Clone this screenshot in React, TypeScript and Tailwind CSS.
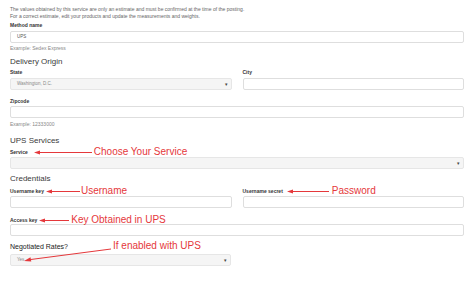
import React from "react";

// Small red callout arrow used by the annotations (points left)
const Arrow = ({ width }: { width: number }) => (
  <svg width={width} height={5} viewBox={`0 0 ${width} 5`} className="block shrink-0">
    <polygon points="0,2.5 6,0.5 6,4.5" fill="#e5383b" />
    <line x1={5} y1={2.5} x2={width} y2={2.5} stroke="#e5383b" strokeWidth={1} />
  </svg>
);

const Note = ({ children }: { children: React.ReactNode }) => (
  <span className="whitespace-nowrap text-[10px] leading-[8px] text-[#e5383b]">{children}</span>
);

const Label = ({ children }: { children: React.ReactNode }) => (
  <div className="whitespace-nowrap text-[5px] font-bold leading-[8px] text-[#333]">{children}</div>
);

const Input = ({ className = "" }: { className?: string }) => (
  <div className={`h-[12px] rounded-[2px] border border-[#dedede] bg-white ${className}`} />
);

const Select = ({ value, className = "" }: { value?: string; className?: string }) => (
  <div
    className={`flex h-[12px] items-center justify-between rounded-[2px] border border-[#e6e6e6] bg-[#f5f5f5] pl-[6px] pr-[3px] ${className}`}
  >
    <span className="text-[4.5px] leading-[6px] text-[#888]">{value}</span>
    <span className="text-[5px] leading-[6px] text-[#444]">▾</span>
  </div>
);

const Heading = ({ children, className = "" }: { children: React.ReactNode; className?: string }) => (
  <div className={`text-[8px] leading-[10px] text-[#3a3a3a] ${className}`}>{children}</div>
);

const Hint = ({ children, className = "" }: { children: React.ReactNode; className?: string }) => (
  <div className={`text-[5px] leading-[8px] text-[#888] ${className}`}>{children}</div>
);

export default function App() {
  return (
    <div
      className="relative h-[293px] w-[474px] overflow-hidden bg-white pl-[10px] pr-[10px] pt-[6px] text-[5px] leading-[8px]"
      style={{ fontFamily: '"Liberation Sans", Arial, sans-serif' }}
    >
      {/* intro */}
      <div className="text-[5px] leading-[7px] text-[#666]">
        The values obtained by this service are only an estimate and must be confirmed at the time of the posting.
        <br />
        For a correct estimate, edit your products and update the measurements and weights.
      </div>

      <div className="mt-[1px]">
        <Label>Method name</Label>
      </div>
      <div className="mt-[2px] flex h-[12px] items-center rounded-[2px] border border-[#dedede] pl-[6px]">
        <span className="text-[4.5px] leading-[6px] text-[#555]">UPS</span>
      </div>
      <Hint className="mt-[1px]">Example: Sedex Express</Hint>

      {/* Delivery Origin */}
      <Heading className="mt-[5px]">Delivery Origin</Heading>
      <div className="mt-[1px] grid grid-cols-2 gap-x-[11px]">
        <div>
          <Label>State</Label>
          <Select value="Washington, D.C." className="mt-[2px]" />
        </div>
        <div>
          <Label>City</Label>
          <Input className="mt-[2px]" />
        </div>
      </div>
      <div className="mt-[7px]">
        <Label>Zipcode</Label>
      </div>
      <Input className="mt-[1px]" />
      <Hint className="mt-[2px]">Example: 12333000</Hint>

      {/* UPS Services */}
      <Heading className="mt-[8px]">UPS Services</Heading>
      <div className="mt-[2px] flex h-[8px] items-center">
        <Label>Service</Label>
        <span className="ml-[6px] mr-[2px] flex">
          <Arrow width={58} />
        </span>
        <Note>Choose Your Service</Note>
      </div>
      <Select className="mt-[1px]" />

      {/* Credentials */}
      <Heading className="mt-[5px]">Credentials</Heading>
      <div className="mt-[3px] grid grid-cols-2 gap-x-[11px]">
        <div>
          <div className="flex h-[8px] items-center">
            <Label>Username key</Label>
            <span className="ml-[2px] mr-[1px] flex">
              <Arrow width={34} />
            </span>
            <Note>Username</Note>
          </div>
          <Input className="mt-[1px]" />
        </div>
        <div>
          <div className="flex h-[8px] items-center">
            <Label>Username secret</Label>
            <span className="ml-[4px] mr-[3px] flex">
              <Arrow width={42} />
            </span>
            <Note>Password</Note>
          </div>
          <Input className="mt-[1px]" />
        </div>
      </div>
      <div className="mt-[8px] flex h-[8px] items-center">
        <Label>Access key</Label>
        <span className="ml-[2px] mr-[2px] flex">
          <Arrow width={30} />
        </span>
        <Note>Key Obtained in UPS</Note>
      </div>
      <Input />

      {/* Negotiated rates */}
      <div className="relative mt-[6px] flex h-[10px] items-center">
        <span className="text-[7px] leading-[10px] text-[#222]">Negotiated Rates?</span>
        <span className="absolute left-[103px] top-[-1px] whitespace-nowrap text-[10px] leading-[10px] text-[#e5383b]">
          If enabled with UPS
        </span>
        {/* diagonal callout pointing at the "Yes" option */}
        <svg className="absolute left-[12px] top-[3px]" width={90} height={18} viewBox="0 0 90 18">
          <polygon points="2,16 8.5,12.2 9.3,16.4" fill="#e5383b" />
          <line x1={8} y1={14.6} x2={89} y2={4} stroke="#e5383b" strokeWidth={1} />
        </svg>
      </div>
      <div className="mt-[2px] w-[221px]">
        <Select value="Yes" />
      </div>
    </div>
  );
}
